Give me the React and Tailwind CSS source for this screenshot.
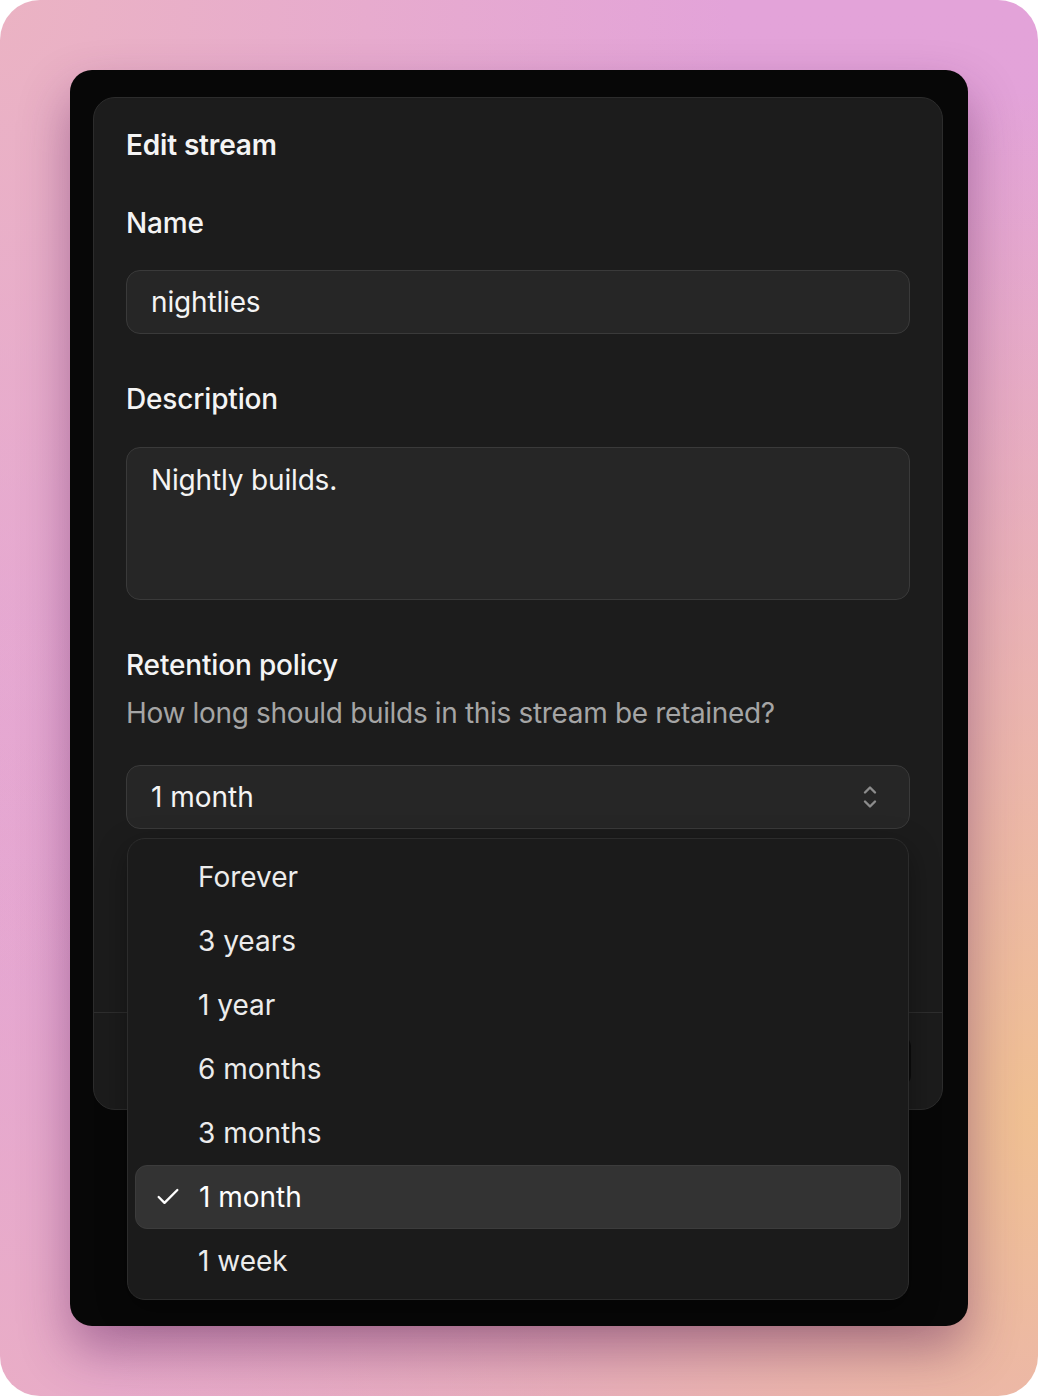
import React from 'react';
import { Check } from 'lucide-react';

const options = ['Forever', '3 years', '1 year', '6 months', '3 months', '1 month', '1 week'];

const UpDown = () => (
    <svg width="16" height="28" viewBox="0 0 16 28" fill="none" stroke="#8c8c8c" strokeWidth="2.4" strokeLinecap="round" strokeLinejoin="round">
        <path d="M3 9.5 L8 4.5 L13 9.5" />
        <path d="M3 18.5 L8 23.5 L13 18.5" />
    </svg>
);

const App = () => {
    const selected = '1 month';

    return (
        <div className="w-full h-[1396px] bg-white tracking-[-0.01em]" style={{ fontFamily: 'Inter, "Noto Sans", sans-serif' }}>
            <div className="h-full rounded-[40px] pt-[70px] px-[70px] bg-[radial-gradient(ellipse_at_0%_0%,#ebb3c3_0%,transparent_50%),radial-gradient(ellipse_at_100%_80%,#f0c092_0%,transparent_65%),radial-gradient(ellipse_at_0%_100%,#e9adc6_0%,transparent_40%),linear-gradient(#e3a3d9,#e2a1da)]">
                {/* frame */}
                <div className="relative h-[1256px] rounded-[22px] bg-[#070707] pt-[27px] pl-[23px] pr-[25px] shadow-[0_24px_50px_rgba(90,30,90,0.45)]">
                    {/* dialog */}
                    <div className="rounded-[22px] border border-[#2c2c2c] bg-[#1c1c1c] text-[#f4f4f4]">
                        <div className="px-[32px] pt-[32px] pb-[183px]">
                            <h2 className="text-[28px] leading-[30px] font-semibold">Edit stream</h2>

                            <div className="mt-[43px] text-[28px] leading-[40px] font-medium">Name</div>
                            <div className="mt-[27px] h-[64px] rounded-[14px] border border-[#3a3a3a] bg-[#262626] px-[24px] flex items-center text-[28px]">
                                nightlies
                            </div>

                            <div className="mt-[45px] text-[28px] leading-[40px] font-medium">Description</div>
                            <div className="mt-[28px] h-[153px] rounded-[14px] border border-[#3a3a3a] bg-[#262626] px-[24px] pt-[12px] text-[28px] leading-[40px]">
                                Nightly builds.
                            </div>

                            <div className="mt-[45px] text-[28px] leading-[40px] font-medium">Retention policy</div>
                            <div className="mt-[8px] text-[28px] leading-[40px] text-[#a5a5a5] tracking-[-0.012em]">
                                How long should builds in this stream be retained?
                            </div>
                            <div className="mt-[32px] h-[64px] rounded-[14px] border border-[#3a3a3a] bg-[#262626] pl-[24px] pr-[31px] flex items-center justify-between text-[28px] tracking-normal">
                                <span>1 month</span>
                                <UpDown />
                            </div>
                        </div>

                        {/* footer */}
                        <div className="h-[97px] border-t border-[#2e2e2e] px-[31px] flex items-center justify-end gap-3">
                            <button className="h-[52px] px-[24px] rounded-[12px] bg-[#0c0c0c] text-[26px] text-white">Save</button>
                        </div>
                    </div>

                    {/* listbox */}
                    <div className="absolute left-[57px] top-[768px] w-[782px] h-[462px] rounded-[18px] border border-[#2c2c2c] bg-[#1b1b1b] px-[7px] py-[6px] tracking-normal shadow-[0_10px_30px_rgba(0,0,0,0.35)]">
                        {options.map((o) => (
                            <div
                                key={o}
                                className={`relative h-[64px] rounded-[12px] flex items-center pl-[63px] text-[28px] ${o === selected ? 'bg-[#333333] border border-[#3c3c3c] text-white' : 'text-[#ececec]'}`}
                            >
                                {o === selected && (
                                    <Check className="absolute left-[18px] top-1/2 -translate-y-1/2" size={28} strokeWidth={2} />
                                )}
                                {o}
                            </div>
                        ))}
                    </div>
                </div>
            </div>
        </div>
    );
};

export default App;
